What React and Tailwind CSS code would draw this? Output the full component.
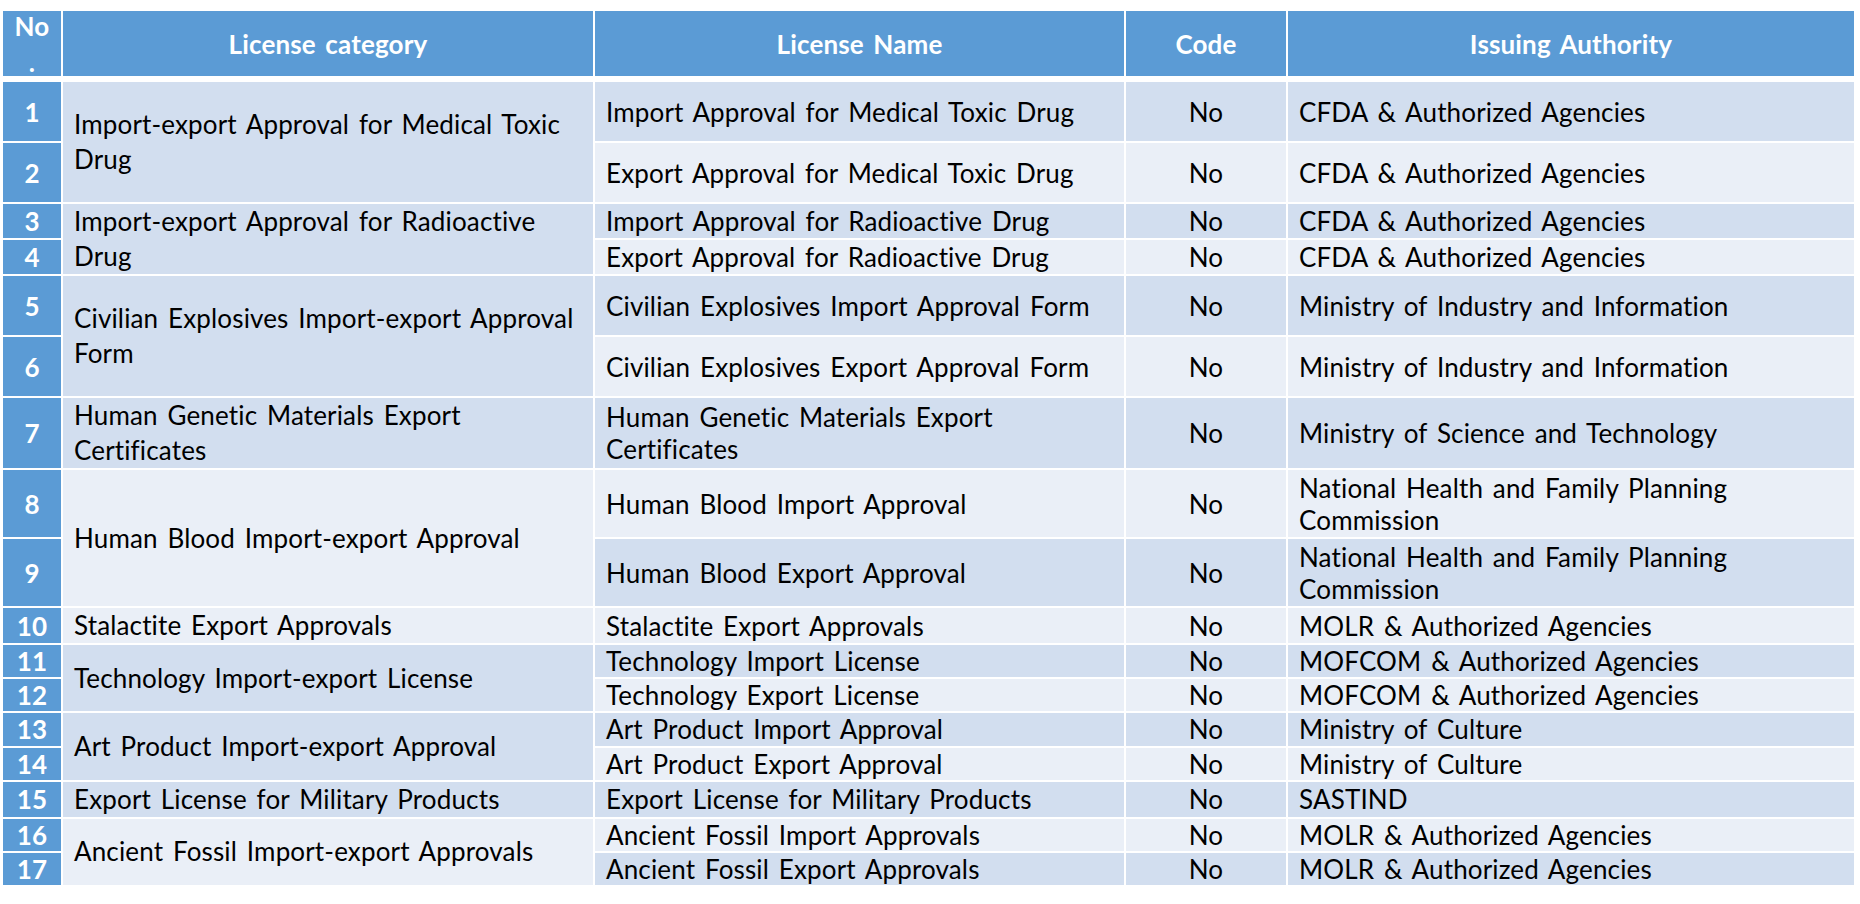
import React from 'react';

const H = {
  tall: 'h-[59px]',
  mid: 'h-[32.5px]',
  short: 'h-[32.2px]',
  xtall: 'h-[67px]',
};

// banded row colours, merged cells keep the colour of their first row
const DARK = 'bg-[#D2DEEF]';
const LIGHT = 'bg-[#EAEFF7]';

const groups = [
  {
    category: ['Import-export Approval for Medical Toxic', 'Drug'],
    size: 'tall',
    items: [
      { name: ['Import Approval for Medical Toxic Drug'], auth: ['CFDA & Authorized Agencies'] },
      { name: ['Export Approval for Medical Toxic Drug'], auth: ['CFDA & Authorized Agencies'] },
    ],
  },
  {
    category: ['Import-export Approval for Radioactive', 'Drug'],
    size: 'mid',
    items: [
      { name: ['Import Approval for Radioactive Drug'], auth: ['CFDA & Authorized Agencies'] },
      { name: ['Export Approval for Radioactive Drug'], auth: ['CFDA & Authorized Agencies'] },
    ],
  },
  {
    category: ['Civilian Explosives Import-export Approval', 'Form'],
    size: 'tall',
    items: [
      { name: ['Civilian Explosives Import Approval Form'], auth: ['Ministry of Industry and Information'] },
      { name: ['Civilian Explosives Export Approval Form'], auth: ['Ministry of Industry and Information'] },
    ],
  },
  {
    category: ['Human Genetic Materials Export', 'Certificates'],
    size: 'xtall',
    items: [
      { name: ['Human Genetic Materials Export', 'Certificates'], auth: ['Ministry of Science and Technology'] },
    ],
  },
  {
    category: ['Human Blood Import-export Approval'],
    size: 'xtall',
    items: [
      { name: ['Human Blood Import Approval'], auth: ['National Health and Family Planning', 'Commission'] },
      { name: ['Human Blood Export Approval'], auth: ['National Health and Family Planning', 'Commission'] },
    ],
  },
  {
    category: ['Stalactite Export Approvals'],
    size: 'short',
    items: [{ name: ['Stalactite Export Approvals'], auth: ['MOLR & Authorized Agencies'] }],
  },
  {
    category: ['Technology Import-export License'],
    size: 'short',
    items: [
      { name: ['Technology Import License'], auth: ['MOFCOM & Authorized Agencies'] },
      { name: ['Technology Export License'], auth: ['MOFCOM & Authorized Agencies'] },
    ],
  },
  {
    category: ['Art Product Import-export Approval'],
    size: 'short',
    items: [
      { name: ['Art Product Import Approval'], auth: ['Ministry of Culture'] },
      { name: ['Art Product Export Approval'], auth: ['Ministry of Culture'] },
    ],
  },
  {
    category: ['Export License for Military Products'],
    size: 'short',
    items: [{ name: ['Export License for Military Products'], auth: ['SASTIND'] }],
  },
  {
    category: ['Ancient Fossil Import-export Approvals'],
    size: 'short',
    items: [
      { name: ['Ancient Fossil Import Approvals'], auth: ['MOLR & Authorized Agencies'] },
      { name: ['Ancient Fossil Export Approvals'], auth: ['MOLR & Authorized Agencies'] },
    ],
  },
];

const Lines = ({ lines }) =>
  lines.map((line, i) => (
    <React.Fragment key={i}>
      {i > 0 && <br />}
      {line}
    </React.Fragment>
  ));

const HeadCell = ({ children }) => (
  <th className="p-0 pb-[4px] font-bold">
    <div className="h-[65px] bg-[#5B9BD5] text-white flex items-center justify-center leading-[36px]">
      <div>{children}</div>
    </div>
  </th>
);

const App = () => {
  let no = 0;

  return (
    <div className="min-h-screen bg-white pt-[9px] pl-[1px] font-['Lato',sans-serif] text-[26px] text-black tracking-[0.15px] [word-spacing:3px]">
      <table className="table-fixed border-separate border-spacing-[2px] w-[1855px]">
        <colgroup>
          <col className="w-[58px]" />
          <col className="w-[530px]" />
          <col className="w-[529px]" />
          <col className="w-[160px]" />
          <col className="w-[566px]" />
        </colgroup>
        <thead>
          <tr>
            <HeadCell>No<br />.</HeadCell>
            <HeadCell>License category</HeadCell>
            <HeadCell>License Name</HeadCell>
            <HeadCell>Code</HeadCell>
            <HeadCell>Issuing Authority</HeadCell>
          </tr>
        </thead>
        <tbody>
          {groups.map((group, gi) =>
            group.items.map((item, ii) => {
              no += 1;
              const bg = no % 2 === 1 ? DARK : LIGHT;
              return (
                <tr key={`${gi}-${ii}`}>
                  <td className={`${H[group.size]} p-0 bg-[#5B9BD5] text-white font-bold text-center align-middle leading-[32px]`}>
                    {no}
                  </td>
                  {ii === 0 && (
                    <td
                      rowSpan={group.items.length}
                      className={`${bg} px-[11px] py-0 align-middle whitespace-nowrap leading-[35px]`}
                    >
                      <Lines lines={group.category} />
                    </td>
                  )}
                  <td className={`${bg} px-[11px] py-0 align-middle whitespace-nowrap leading-[32px]`}>
                    <Lines lines={item.name} />
                  </td>
                  <td className={`${bg} p-0 text-center align-middle leading-[32px]`}>No</td>
                  <td className={`${bg} px-[11px] py-0 align-middle whitespace-nowrap leading-[32px]`}>
                    <Lines lines={item.auth} />
                  </td>
                </tr>
              );
            })
          )}
        </tbody>
      </table>
    </div>
  );
};

export default App;
